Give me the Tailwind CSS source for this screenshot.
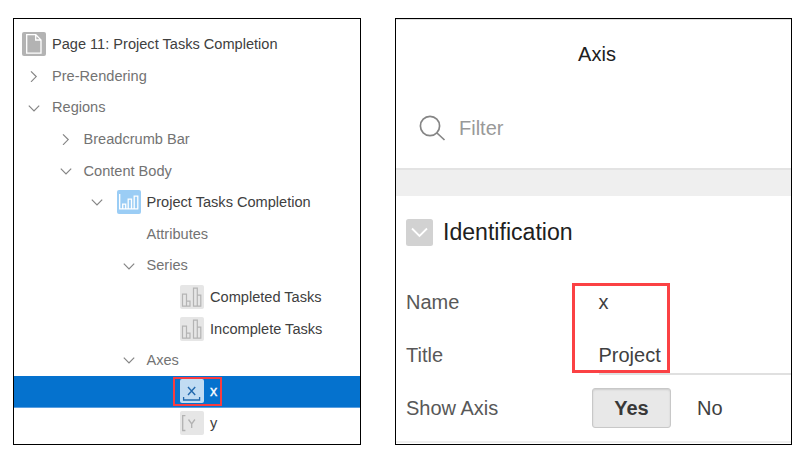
<!DOCTYPE html>
<html lang="en">
<head>
<meta charset="utf-8">
<title>Page Designer</title>
<script src="https://cdn.jsdelivr.net/npm/@tailwindcss/browser@4"></script>
</head>
<body class="w-[807px] h-[458px] overflow-hidden bg-white font-['Liberation_Sans',Arial,sans-serif]">
<svg class="hidden">
  <symbol id="right" viewBox="0 0 12 12"><path d="M3 1.4 8.2 6.6 3 11.8" fill="none" stroke="#858585" stroke-width="1.2"/></symbol>
  <symbol id="down" viewBox="0 0 12 12"><path d="M.8 3.7 6 9 11.2 3.7" fill="none" stroke="#858585" stroke-width="1.2"/></symbol>
  <symbol id="bars" viewBox="0 0 24 24"><rect width="24" height="24" rx="2" fill="#e6e6e6"/><path d="M2.5 21.2V9.2h4v12zM6.5 21.2v-5h3.5v5zM13.5 21.2V3.2h3.8v18zM17.3 21.2V10.2h3.5v11z" fill="none" stroke="#b4b4b4" stroke-width="1.2"/></symbol>
</svg>
<div class="flex pt-[18px] pl-[13px] gap-[34px]">
  <section class="w-[348px] h-[427px] border border-black pt-[9.6px] text-[14.58px] text-[#737373] overflow-hidden [&_span]:pt-[1.4px]">
    <div class="flex items-center h-[31.6px] pl-2 text-[#404040]">
      <svg class="size-6 mr-1.5" viewBox="0 0 24 24"><rect width="24" height="24" rx="2" fill="#b3b3b3"/><path d="M4.7 2.7h9.1l5.2 5.2v13.3H4.7zM13.7 2.7v5.3H19" fill="none" stroke="#fff" stroke-width="1.3"/></svg>
      <span>Page 11: Project Tasks Completion</span>
    </div>
    <div class="flex items-center h-[31.6px] pl-3.5"><svg class="size-3 mr-3"><use href="#right"/></svg><span>Pre-Rendering</span></div>
    <div class="flex items-center h-[31.6px] pl-3.5"><svg class="size-3 mr-3"><use href="#down"/></svg><span>Regions</span></div>
    <div class="flex items-center h-[31.6px] pl-[45.5px]"><svg class="size-3 mr-3"><use href="#right"/></svg><span>Breadcrumb Bar</span></div>
    <div class="flex items-center h-[31.6px] pl-[45.5px]"><svg class="size-3 mr-3"><use href="#down"/></svg><span>Content Body</span></div>
    <div class="flex items-center h-[31.6px] pl-[77px] text-[#404040]">
      <svg class="size-3 mr-[13.5px]"><use href="#down"/></svg>
      <svg class="size-6 mr-1.5" viewBox="0 0 24 24"><rect width="24" height="24" rx="2" fill="#9bcdf5"/><path d="M2.7 4v14.8h18.6M5.7 18.5v-4.3h3v4.3M11.2 18.5V9.2h3.3v9.3M17.2 18.5V6.2h3.6v12.6" fill="none" stroke="#fff" stroke-width="1.3"/></svg>
      <span>Project Tasks Completion</span>
    </div>
    <div class="flex items-center h-[31.6px] pl-[132.5px]"><span>Attributes</span></div>
    <div class="flex items-center h-[31.6px] pl-[108.5px]"><svg class="size-3 mr-3"><use href="#down"/></svg><span>Series</span></div>
    <div class="flex items-center h-[31.6px] pl-[166px] text-[#404040]"><svg class="size-6 mr-1.5"><use href="#bars"/></svg><span>Completed Tasks</span></div>
    <div class="flex items-center h-[31.6px] pl-[166px] text-[#404040]"><svg class="size-6 mr-1.5"><use href="#bars"/></svg><span>Incomplete Tasks</span></div>
    <div class="flex items-center h-[31.6px] pl-[108.5px]"><svg class="size-3 mr-3"><use href="#down"/></svg><span>Axes</span></div>
    <div class="relative flex items-center h-[31.6px] pl-[166px] text-white bg-[#0572ce] border-b border-[#5b9fe0]">
      <svg class="size-6 mr-1.5" viewBox="0 0 24 24"><rect width="24" height="24" rx="2" fill="#c1dcf3"/><path d="M8 8 15.2 16M15.2 8 8 16" stroke="#2168ad" stroke-width="1.4"/><path d="M3.6 18v3H19.6v-3" fill="none" stroke="#2168ad" stroke-width="1.3"/></svg>
      <span class="[-webkit-text-stroke:.3px_white]">x</span>
      <div class="absolute left-[159px] top-px w-[49px] h-[29px] border-2 border-[#f83c40]"></div>
    </div>
    <div class="flex items-center h-[31.6px] pl-[166px] text-[#404040]">
      <svg class="size-6 mr-1.5 mb-px" viewBox="0 0 24 24"><rect width="24" height="24" rx="2" fill="#e6e6e6"/><path d="M5.4 4.7H2.7v14.8h2.7M8.5 8.5l3.2 4.5 3.2-4.5M11.7 13v4" fill="none" stroke="#b2b2b2" stroke-width="1.3"/></svg>
      <span>y</span>
    </div>
  </section>

  <section class="relative w-[397px] h-[427px] border border-black text-[20px] text-[#585858] overflow-hidden">
    <div class="h-[149px] border-t border-[#dfdfdf]">
      <h1 class="h-[68px] pl-[7px] flex items-center justify-center text-[#202020]">Axis</h1>
      <div class="flex items-center h-[80px] pl-[22px] text-[#999]">
        <svg class="size-7 mr-[13px]" viewBox="0 0 28 28"><circle cx="12" cy="12" r="9.6" fill="none" stroke="#858585" stroke-width="1.7"/><path d="m19 19 7.5 7" stroke="#858585" stroke-width="1.7"/></svg>
        <span>Filter</span>
      </div>
    </div>
    <div class="h-7 bg-[#efefef] border-t-2 border-[#e3e3e3]"></div>
    <div class="flex items-center h-[73px] pl-2.5 text-[23.1px] text-[#202020]">
      <svg class="size-[27px] mr-2.5" viewBox="0 0 27 27"><rect width="27" height="27" rx="2.5" fill="#d2d2d2"/><path d="m6 9.5 7.5 7.5L21 9.5" fill="none" stroke="#fff" stroke-width="1.8"/></svg>
      <h2>Identification</h2>
    </div>
    <div class="flex items-center h-[66px] pl-2.5"><span class="w-[192.5px]">Name</span><span class="text-[#404040]">x</span></div>
    <div class="flex h-[40px] pl-2.5"><span class="w-[192.5px] pt-[5px]">Title</span><div class="grow pt-[5px] text-[#404040] border-b-2 border-[#e0e0e0]">Project</div></div>
    <div class="flex items-center h-[66px] pl-2.5">
      <span class="w-[186px]">Show Axis</span>
      <div class="w-[79px] h-10 flex items-center justify-center rounded-[3px] bg-[#e8e8e8] border border-[#c8c8c8] shadow-[inset_0_1px_2px_#ccc] font-bold text-[#383838]">Yes</div>
      <span class="pl-[26px] text-[#404040]">No</span>
    </div>
    <div class="h-[2px] bg-[#efefef]"></div>
    <div class="absolute left-[176px] top-[264px] w-[98px] h-[90px] border-3 border-[#fb4144]"></div>
  </section>
</div>
</body>
</html>
